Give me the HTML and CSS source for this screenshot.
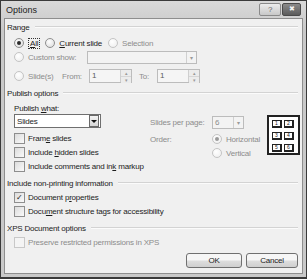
FILE: index.html
```html
<!DOCTYPE html>
<html lang="en">
<head>
    <meta charset="UTF-8">
    <title>Options</title>
    <link rel="stylesheet" href="styles.css">
</head>
<body>
    <div class="window">
        <div class="titlebar">
            <span class="title">Options</span>
            <div class="title-buttons">
                <span class="tb-help">?</span>
                <span class="tb-close">&#10006;</span>
            </div>
        </div>

        <div class="content">
            <div class="group-label"><span>Range</span></div>

            <div class="row row-range">
                <span class="radio checked"></span><span class="focus"><u>A</u>ll</span>
                <span class="radio gap"></span><span><u>C</u>urrent slide</span>
                <span class="radio gap disabled"></span><span class="muted">Selection</span>
            </div>

            <div class="row">
                <span class="radio disabled"></span><span class="muted label-custom">Custom show:</span>
                <span class="combo combo-off wide"><span class="arrow-off">&#9662;</span></span>
            </div>

            <div class="row row-slides">
                <span class="radio disabled"></span><span class="muted label-slides">Slide(s)</span>
                <span class="muted label-from">From:</span>
                <span class="spin"><span class="spin-value">1</span><span class="spin-btns"><i>&#9652;</i><i>&#9662;</i></span></span>
                <span class="muted label-to">To:</span>
                <span class="spin"><span class="spin-value">1</span><span class="spin-btns"><i>&#9652;</i><i>&#9662;</i></span></span>
            </div>

            <div class="group-label gl-publish"><span>Publish options</span></div>

            <div class="row indent row-what"><span>Publish <u>w</u>hat:</span></div>

            <div class="publish">
                <div class="pub-left">
                    <span class="combo combo-on"><span class="combo-text">Slides</span><span class="arrow-on"></span></span>
                    <div class="row"><span class="check"></span><span>Fram<u>e</u> slides</span></div>
                    <div class="row"><span class="check"></span><span>Include <u>h</u>idden slides</span></div>
                    <div class="row"><span class="check"></span><span>Include comments and in<u>k</u> markup</span></div>
                </div>
                <div class="pub-mid">
                    <div class="row row-per-page">
                        <span class="muted label-mid">Slides per page:</span>
                        <span class="combo combo-off small"><span class="combo-text muted">6</span><span class="arrow-off">&#9662;</span></span>
                    </div>
                    <div class="row">
                        <span class="muted label-mid">Order:</span>
                        <span class="radio checked disabled"></span><span class="muted">Horizontal</span>
                    </div>
                    <div class="row">
                        <span class="label-mid"></span>
                        <span class="radio disabled"></span><span class="muted">Vertical</span>
                    </div>
                </div>
                <div class="layout-icon">
                    <span>1</span><span>2</span>
                    <span>3</span><span>4</span>
                    <span>5</span><span>6</span>
                </div>
            </div>

            <div class="group-label gl-info"><span>Include non-printing information</span></div>
            <div class="row indent"><span class="check checked">&#10003;</span><span>Document p<u>r</u>operties</span></div>
            <div class="row indent"><span class="check"></span><span>Docu<u>m</u>ent structure tags for accessibility</span></div>

            <div class="group-label gl-xps"><span>XPS Document options</span></div>
            <div class="row indent muted"><span class="check disabled"></span><span>Preserve restricted permissions in XPS</span></div>

            <div class="buttons">
                <button class="btn">OK</button>
                <button class="btn">Cancel</button>
            </div>
        </div>
    </div>
</body>
</html>
```

FILE: styles.css
```css
body {
    margin: 0;
    font-family: "Liberation Sans", Arial, sans-serif;
    font-size: 8px;
    letter-spacing: -0.2px;
    color: #1c1c1c;
    background: #ffffff;
}

.window {
    width: 307px;
    height: 279px;
    box-sizing: border-box;
    border: 1px solid #3a3a3a;
    border-bottom-width: 2px;
    padding: 0 3px 3px 3px;
    background: linear-gradient(#d9d9d9, #c9c9c9 30px, #c9c9c9);
    display: flex;
    flex-direction: column;
}

.titlebar {
    height: 17px;
    display: flex;
    align-items: center;
    justify-content: space-between;
    padding: 0 2px 0 2px;
}

.title {
    font-size: 9px;
    letter-spacing: 0;
    color: #222;
}

.title-buttons {
    display: flex;
    gap: 1px;
    margin-top: -1px;
}

.tb-help,
.tb-close {
    height: 11px;
    border: 1px solid #8a8a8a;
    border-radius: 2px;
    display: flex;
    align-items: center;
    justify-content: center;
    font-size: 8px;
}

.tb-help {
    width: 20px;
    background: linear-gradient(#ececec, #c8c8c8);
    color: #666;
}

.tb-close {
    width: 17px;
    background: linear-gradient(#8a8a8a, #5c5c5c);
    border-color: #4a4a4a;
    color: #f2f2f2;
    font-size: 7px;
}

.content {
    flex: 1;
    border: 1px solid #8e8e8e;
    background-color: #f0f0f0;
    padding: 1px 2px 0 2px;
}

.row {
    height: 14px;
    display: flex;
    align-items: center;
    white-space: nowrap;
}

.indent {
    padding-left: 7px;
}

.muted {
    color: #8c8c8c;
}

u {
    text-decoration: underline;
    text-underline-offset: 1px;
}

/* group headings with a rule */
.group-label {
    height: 14px;
    display: flex;
    align-items: center;
    gap: 5px;
}

.group-label::after {
    content: "";
    flex: 1;
    height: 1px;
    background: #d3d3d3;
    border-bottom: 1px solid #fbfbfb;
    margin-right: 2px;
}

.gl-publish { margin-top: 3px; }
.gl-info { margin-top: 3px; }
.gl-xps { margin-top: 3px; }

/* radio buttons */
.radio {
    width: 8px;
    height: 8px;
    border-radius: 50%;
    border: 1px solid #8e8e8e;
    background: radial-gradient(circle at 40% 35%, #ffffff, #d8d8d8);
    margin: 0 4px 0 7px;
    flex-shrink: 0;
    position: relative;
}

.radio.gap {
    margin-left: 6px;
}

.radio.disabled {
    border-color: #c4c4c4;
    background: radial-gradient(circle at 40% 35%, #ffffff, #ececec);
}

.radio.checked::after {
    content: "";
    position: absolute;
    left: 2px;
    top: 2px;
    width: 4px;
    height: 4px;
    border-radius: 50%;
    background: #2b2b2b;
}

.radio.checked.disabled::after {
    background: #9a9a9a;
}

.focus {
    outline: 1px dotted #333;
    outline-offset: 0;
    padding: 0 1px;
    margin-left: 1px;
}

.row-range {
    margin-top: 2px;
}

.label-custom {
    width: 59px;
}

.label-slides {
    width: 34px;
}

.label-from {
    width: 27px;
}

.label-to {
    width: 18px;
    margin-left: 7px;
}

.row-slides {
    margin-top: 5px;
}

.row-what {
    margin-top: 1px;
}

/* combo boxes */
.combo {
    height: 13px;
    box-sizing: border-box;
    display: flex;
    align-items: center;
    justify-content: space-between;
}

.combo-off {
    border: 1px solid #bcbcbc;
    background: #f3f3f3;
}

.combo-off.wide {
    width: 110px;
}

.combo-off.small {
    width: 32px;
}

.arrow-off {
    width: 9px;
    height: 11px;
    margin-left: auto;
    border-left: 1px solid #d0d0d0;
    color: #9a9a9a;
    font-size: 6px;
    display: flex;
    align-items: center;
    justify-content: center;
}

.combo-on {
    width: 87px;
    height: 14px;
    margin-top: -1px;
    border: 1px solid #6f6f6f;
    background: #ffffff;
}

.combo-text {
    padding-left: 2px;
}

.arrow-on {
    width: 8px;
    height: 10px;
    margin-right: 1px;
    border: 1px solid #6a6a6a;
    background: linear-gradient(#f4f4f4, #d6d6d6);
    position: relative;
}

.arrow-on::after {
    content: "";
    position: absolute;
    left: 1px;
    top: 4px;
    border-left: 3px solid transparent;
    border-right: 3px solid transparent;
    border-top: 3px solid #111;
}

/* spin boxes */
.spin {
    width: 43px;
    height: 14px;
    box-sizing: border-box;
    border: 1px solid #bcbcbc;
    background: #f5f5f5;
    display: flex;
    justify-content: space-between;
}

.spin-value {
    padding-left: 2px;
    color: #5a5a5a;
    line-height: 12px;
}

.spin-btns {
    width: 10px;
    display: flex;
    flex-direction: column;
    border-left: 1px solid #cfcfcf;
}

.spin-btns i {
    flex: 1;
    font-style: normal;
    font-size: 5px;
    color: #9a9a9a;
    display: flex;
    align-items: center;
    justify-content: center;
    background: #ececec;
}

.spin-btns i + i {
    border-top: 1px solid #d6d6d6;
}

/* publish options block */
.publish {
    display: flex;
    padding-left: 7px;
}

.pub-left {
    width: 136px;
    flex-shrink: 0;
    display: flex;
    flex-direction: column;
}

.pub-left .combo-on + .row {
    margin-top: 3px;
}

.pub-mid {
    width: 117px;
    flex-shrink: 0;
}

.pub-mid .row-per-page {
    height: 14px;
    margin-bottom: 3px;
}

.label-mid {
    width: 62px;
}

.pub-mid .radio {
    margin-left: 0;
}

.layout-icon {
    width: 33px;
    height: 40px;
    flex-shrink: 0;
    box-sizing: border-box;
    border: 2px solid #222;
    background: #fff;
    display: grid;
    grid-template-columns: 10px 10px;
    grid-auto-rows: 8px;
    column-gap: 2px;
    row-gap: 4px;
    padding: 3px 0 0 3px;
}

.layout-icon span {
    border: 1px solid #222;
    border-right-width: 2px;
    border-bottom-width: 2px;
    font-size: 5px;
    line-height: 5px;
    letter-spacing: 0;
    text-align: center;
}

/* checkboxes */
.check {
    width: 9px;
    height: 9px;
    border: 1px solid #8e8e8e;
    background: linear-gradient(135deg, #dcdcdc, #fafafa);
    margin-right: 3px;
    flex-shrink: 0;
    display: flex;
    align-items: center;
    justify-content: center;
    font-size: 8px;
    color: #222;
}

.check.disabled {
    border-color: #c8c8c8;
    background: #f4f4f4;
}

/* dialog buttons */
.buttons {
    display: flex;
    justify-content: flex-end;
    gap: 4px;
    margin-top: 4px;
    padding-right: 2px;
}

.btn {
    width: 56px;
    height: 15px;
    padding: 0;
    font-family: "Liberation Sans", Arial, sans-serif;
    font-size: 8px;
    letter-spacing: -0.2px;
    color: #1c1c1c;
    border: 1px solid #707070;
    border-radius: 3px;
    background: linear-gradient(#f6f6f6 45%, #dddddd 55%, #cfcfcf);
}

.btn + .btn {
    width: 52px;
}
```
